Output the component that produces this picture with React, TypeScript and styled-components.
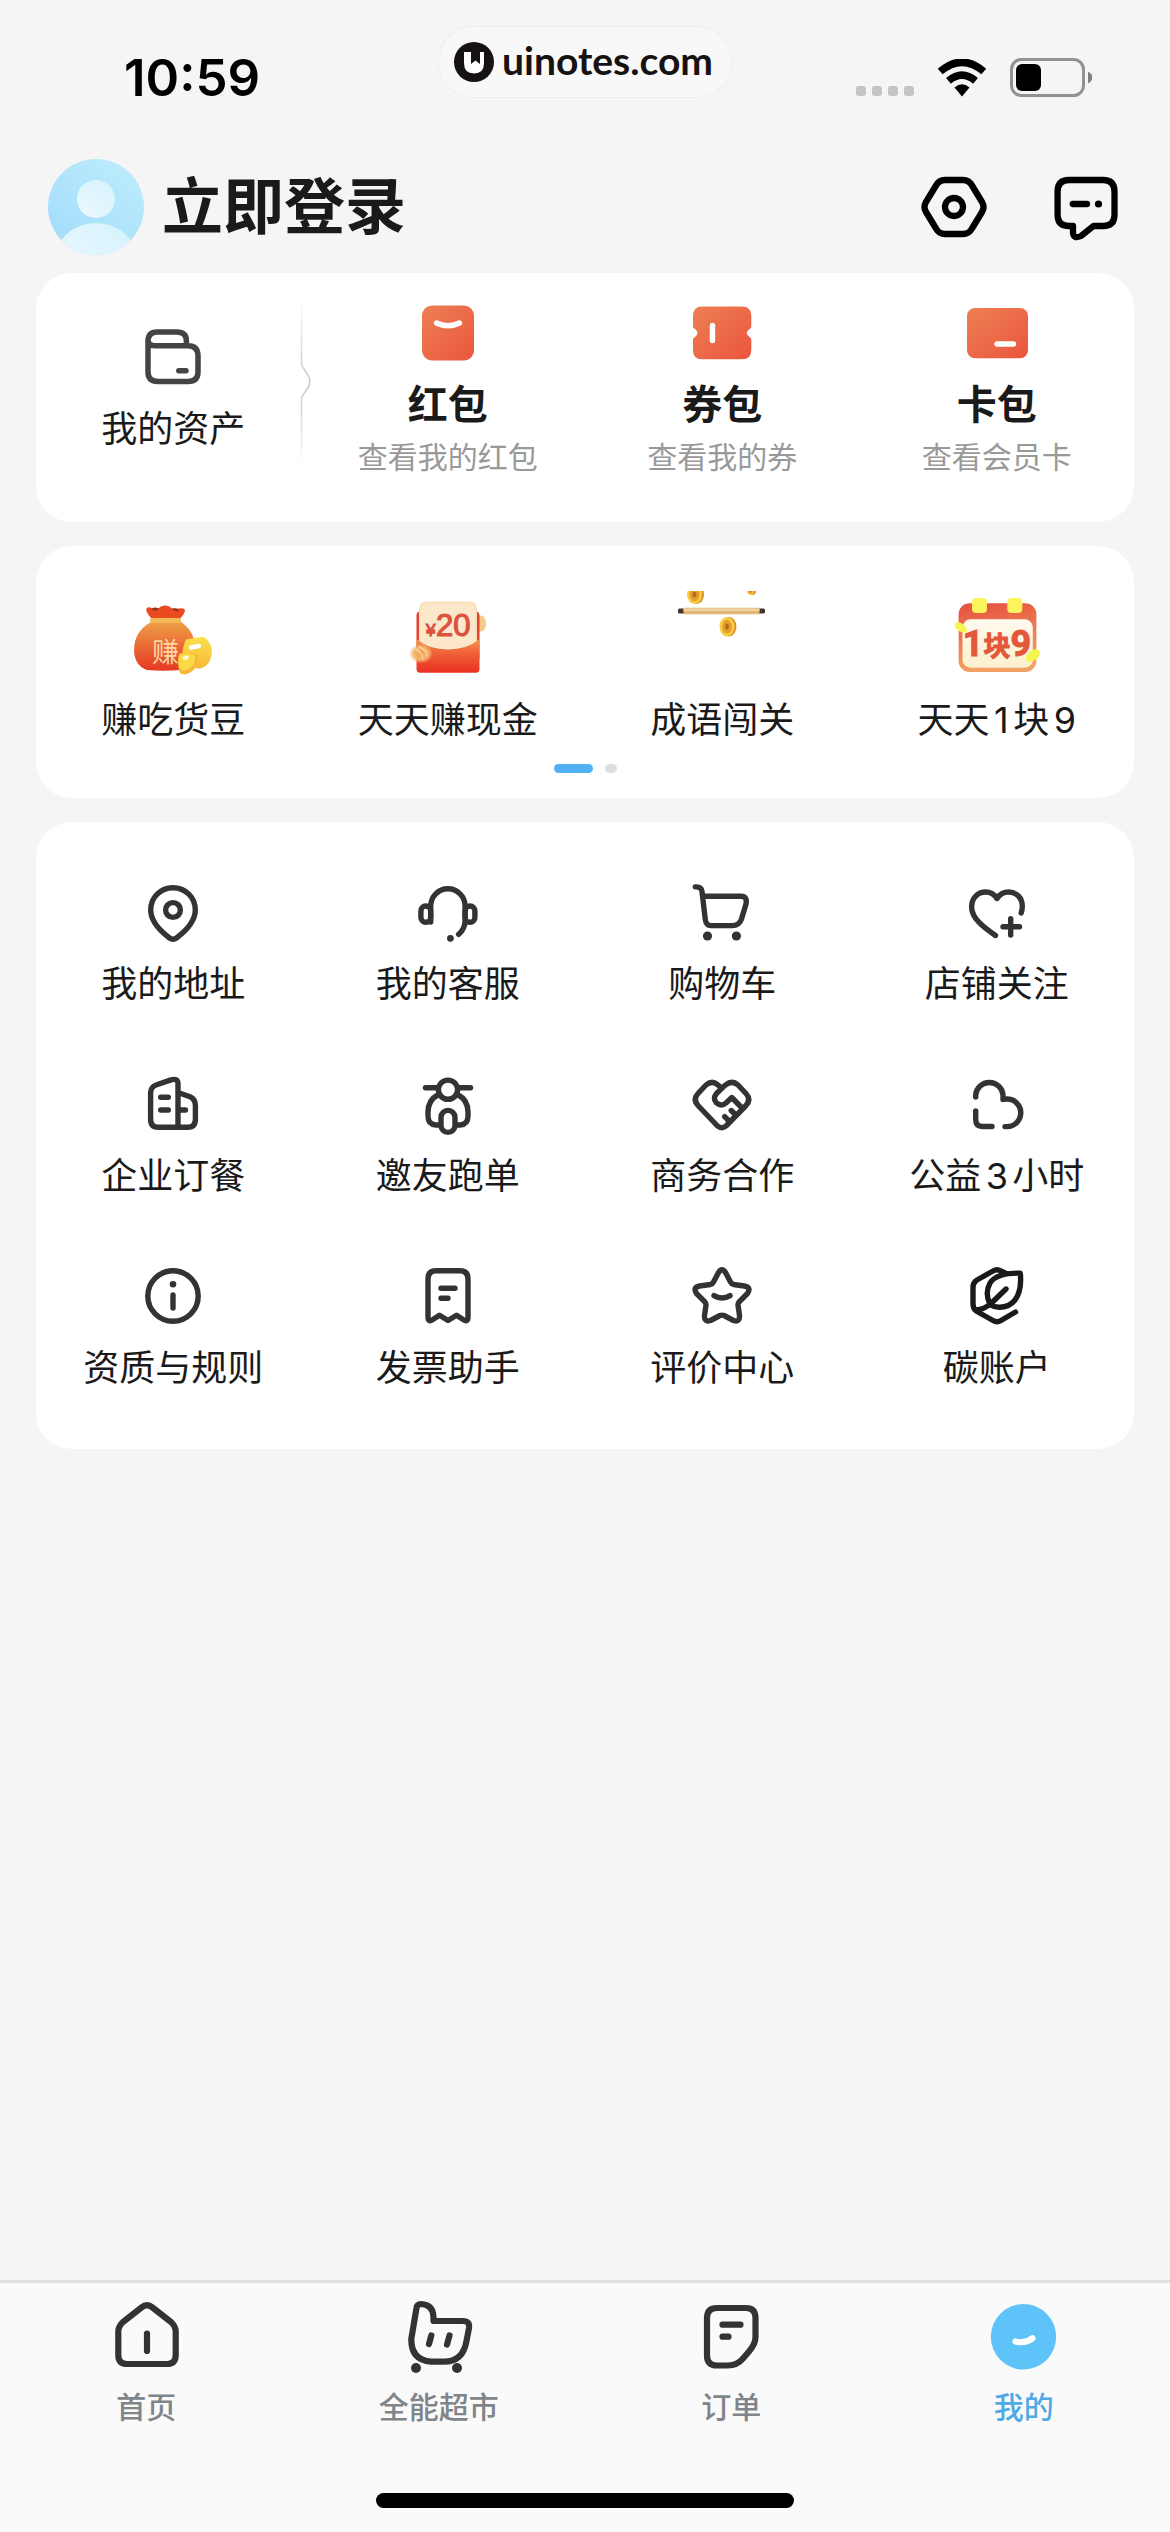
import React from "react";
import styled, { createGlobalStyle } from "styled-components";

const GlobalStyle = createGlobalStyle`
  *, *::before, *::after { box-sizing: border-box; }
  body {
    margin: 0;
    background: #f5f5f5;
    color: #1a1a1a;
    font-family: Inter, "Noto Sans CJK SC", sans-serif;
    text-autospace: normal;
  }
  button { font: inherit; color: inherit; background: none; border: 0; padding: 0; cursor: pointer; }
  a { color: inherit; text-decoration: none; }
  svg { display: block; flex: none; }
`;

const Page = styled.div`
  min-height: 100vh;
  display: flex;
  flex-direction: column;
`;

const StatusBar = styled.div`
  display: grid;
  grid-template-columns: 1fr auto 1fr;
  padding: 26px 0 37px;
`;

const StatusSide = styled.div<{ $end?: boolean }>`
  display: flex;
  align-items: center;
  justify-content: ${(p) => (p.$end ? "flex-end" : "flex-start")};
  gap: 22px;
  height: 72px;
  padding: ${(p) => (p.$end ? "32px 78px 0 0" : "32px 0 0 124px")};
`;

const Clock = styled.time`
  font-size: 51px;
  font-weight: 600;
  line-height: 40px;
  color: #000;
`;

const SitePill = styled.div`
  display: flex;
  align-items: center;
  gap: 8px;
  height: 72px;
  padding: 0 18px 0 15px;
  border-radius: 36px;
  border: 1px dotted #e2e2e2;
  background: #f8f8f8;
  color: #171212;
  font-family: Lato, sans-serif;
  font-size: 39px;
  font-weight: 700;

  span {
    line-height: 40px;
    padding-bottom: 4px;
  }
`;

const Header = styled.header`
  display: flex;
  align-items: center;
  justify-content: space-between;
  padding: 24px 48px 18px;
`;

const LoginButton = styled.button`
  display: flex;
  align-items: center;
  gap: 18px;
  font-size: 61px;
  font-weight: 700;
  line-height: 96px;
`;

const HeaderActions = styled.div`
  display: flex;
  gap: 60px;
`;

const IconButton = styled.button`
  display: block;
  color: #000;
`;

const Main = styled.main`
  flex: 1;
  display: flex;
  flex-direction: column;
  gap: 24px;
  padding: 0 36px;
`;

const Card = styled.section<{ $top: number; $bottom: number }>`
  padding: ${(p) => p.$top}px 0 ${(p) => p.$bottom}px;
  border-radius: 36px;
  background: #fff;
`;

const Grid = styled.div<{ $rowGap?: number }>`
  display: grid;
  grid-template-columns: repeat(4, minmax(0, 1fr));
  row-gap: ${(p) => p.$rowGap ?? 0}px;
`;

const Item = styled.a<{ $dark?: boolean }>`
  display: flex;
  flex-direction: column;
  align-items: center;
  color: ${(p) => (p.$dark ? "#1a1a1a" : "#333")};
`;

const Label = styled.span`
  margin-top: 12px;
  color: #1a1a1a;
  font-size: 36px;
  line-height: 48px;
  white-space: nowrap;
`;

const WalletCell = styled(Item)`
  position: relative;
  padding-top: 24px;
  color: #444;
`;

const NotchLine = styled.svg`
  position: absolute;
  top: 0;
  right: 0;
`;

const WalletTitle = styled.strong`
  margin-top: 12px;
  color: #1a1a1a;
  font-size: 40px;
  font-weight: 700;
  line-height: 48px;
`;

const WalletNote = styled.span`
  margin-top: 8px;
  color: #999;
  font-size: 30px;
  line-height: 40px;
`;

const Pager = styled.div`
  display: flex;
  justify-content: center;
  gap: 12px;
  margin-top: 20px;
`;

const PagerDot = styled.span<{ $active?: boolean }>`
  width: ${(p) => (p.$active ? 39 : 12)}px;
  height: 9px;
  border-radius: 5px;
  background: ${(p) => (p.$active ? "#51b1f2" : "#dedede")};
`;

const TabBar = styled.footer`
  border-top: 3px solid #e0e0e0;
  background: #fafafa;
  padding: 12px 0 24px;
`;

const Tabs = styled.nav`
  display: grid;
  grid-template-columns: repeat(4, minmax(0, 1fr));
`;

const Tab = styled.button<{ $active?: boolean }>`
  display: flex;
  flex-direction: column;
  align-items: center;
  color: #333;

  span {
    margin-top: 8px;
    color: ${(p) => (p.$active ? "#51a9e4" : "#80858a")};
    font-size: 30px;
    font-weight: 500;
    line-height: 40px;
  }
`;

const HomeIndicator = styled.div`
  width: 418px;
  height: 15px;
  margin: 66px auto 0;
  border-radius: 8px;
  background: #000;
`;

/* Outline icon drawn with round strokes on a square grid. */
function Line({ size = 72, width = 5.4, children }: { size?: number; width?: number; children: React.ReactNode }) {
  return (
    <svg width={size} height={size} viewBox={`0 0 ${size} ${size}`} fill="none" stroke="currentColor"
      strokeWidth={width} strokeLinecap="round" strokeLinejoin="round" aria-hidden="true">
      {children}
    </svg>
  );
}

function Dot({ x, y, r }: { x: number; y: number; r: number }) {
  return <circle cx={x} cy={y} r={r} fill="currentColor" stroke="none" />;
}

const services: { label: string; dark?: boolean; icon: React.ReactNode }[] = [
  {
    label: "我的地址",
    icon: (
      <>
        <path d="M36 11.7C48.5 11.7 58.3 21.5 58.3 34C58.3 45 50 54 39.5 62Q36 64.5 32.5 62C22 54 13.7 45 13.7 34C13.7 21.5 23.5 11.7 36 11.7Z" />
        <circle cx="36" cy="34" r="7.4" />
      </>
    ),
  },
  {
    label: "我的客服",
    icon: (
      <>
        <path d="M18.7 46V30A17.2 17.2 0 0 1 53.1 30V44Q53.1 53 46.6 58.3" />
        <rect x="8.9" y="30" width="9.8" height="16.3" rx="4.9" />
        <rect x="53.1" y="30" width="9.8" height="16.3" rx="4.9" />
        <Dot x={38.4} y={62.3} r={3.4} />
      </>
    ),
  },
  {
    label: "购物车",
    icon: (
      <>
        <path d="M9.3 10.9Q15.5 10.5 16 15.5L19.3 43.5Q20 49.6 25 49.6H46Q53.5 49.6 55.5 43L60 28Q61.5 20.3 55 20.3H17.5" />
        <Dot x={21.5} y={60} r={4.6} />
        <Dot x={50.4} y={60} r={4.6} />
      </>
    ),
  },
  {
    label: "店铺关注",
    icon: (
      <>
        <path d="M34.5 59.5C22 51 10.6 42 10.6 31C10.6 22 17 16 24.5 16C29.5 16 33.5 18.5 36 22.5C38.5 18.5 42.5 16 47.5 16C55.5 16 61.3 22 61.3 30C61.3 33 61 35 60.2 37" />
        <path d="M49.7 42.7V59M42 50.7H58.5" />
      </>
    ),
  },
  {
    label: "企业订餐",
    icon: (
      <>
        <path d="M13.6 51V25Q13.6 19 19 17L34 11.9Q41 9.7 41 16V59.3M13.6 51Q13.6 59.3 21 59.3H51Q58.4 59.3 58.4 51V38Q58.4 31 53 28.8L41 24.5" />
        <path d="M23.7 29.3H31.3M23.7 42H31.3M42 42H48.5" />
      </>
    ),
  },
  {
    label: "邀友跑单",
    icon: (
      <>
        <circle cx="36" cy="21.7" r="9.6" />
        <path d="M13.5 19.7H25M47 19.7H58.5M26.5 26.5Q16 32 16 44V48Q16 56.5 24 57H27M45.5 26.5Q56 32 56 44V48Q56 56.5 48 57H45" />
        <rect x="29" y="42.4" width="14" height="22" rx="7" />
      </>
    ),
  },
  {
    label: "商务合作",
    icon: (
      <>
        <path d="M35.7 20.3L39.5 17Q46 11.7 52 17L60 25.5Q65.5 31.5 60 37.5L40 58Q35.7 61.5 31.5 58L12 37.5Q6.5 31.5 12 25.5L20 17Q26.5 11.7 32 17Z" />
        <path d="M35.7 20.3L30.5 25.5Q26.5 30.5 30.3 34.7Q35.3 39 40 35L45.8 29.5L56.5 40.5" />
        <path d="M45.2 42.5L49.8 47M38.7 48.7L43 53" />
      </>
    ),
  },
  {
    label: "公益3小时",
    icon: (
      <>
        <path d="M14.7 29V27A13.7 13.7 0 0 1 42 27V31.5Q43.5 31 46 31A13.8 13.8 0 0 1 46 58.6H44" />
        <path d="M14.7 43V51.5Q14.7 58.5 21.5 58.5H31" />
      </>
    ),
  },
  {
    label: "资质与规则",
    icon: (
      <>
        <circle cx="36" cy="36" r="25.2" />
        <path d="M36 35V48" />
        <Dot x={36} y={24.2} r={3.3} />
      </>
    ),
  },
  {
    label: "发票助手",
    icon: (
      <>
        <path d="M16 57V19Q16 10.7 24 10.7H48Q56 10.7 56 19V57Q56 62.5 51.5 59.8L44.5 55.3L36 60.5L27.5 55.3L20.5 59.8Q16 62.5 16 57Z" />
        <path d="M29 28.3H43M29 38.3H36" />
      </>
    ),
  },
  {
    label: "评价中心",
    icon: (
      <>
        <path d="M32.5 12.5Q36 7 39.5 12.5L44.5 22Q45.5 24 47.5 24.5L58.5 26Q65.5 27.5 61.5 33.5L53 42Q51.8 43.3 52 45L53.5 55.5Q54 62.5 47.5 60.5L38 55.5Q36 54.7 34 55.5L24.5 60.5Q18 62.5 18.5 55.5L20 45Q20.2 43.3 19 42L10.5 33.5Q6.5 27.5 13.5 26L24.5 24.5Q26.5 24 27.5 22Z" />
        <path d="M28 35.6Q36 40.5 44 35.6" />
      </>
    ),
  },
  {
    label: "碳账户",
    dark: true,
    icon: (
      <>
        <path d="M45 13.5L40 11Q36 8.5 32 11L16 20Q12 22.5 12 27V44Q12 49 16 51.5L32 60.5Q36 63 40 60.5L54.5 52" />
        <path d="M59.3 13.2Q61 31 54 40Q48 47.5 38 47.3Q33 47.2 29 44.5Q23.5 33 29 23Q36 12.5 59.3 13.2Z" />
        <path d="M45 29L30 43.5Q23 49.5 15 50" />
      </>
    ),
  },
];

function RedGradient({ id }: { id: string }) {
  return (
    <defs>
      <linearGradient id={id} x1="0" y1="0" x2="1" y2="1">
        <stop offset="0" stopColor="#ee8054" />
        <stop offset="1" stopColor="#ea553d" />
      </linearGradient>
    </defs>
  );
}

const wallets = [
  {
    title: "红包",
    note: "查看我的红包",
    icon: (
      <svg width="72" height="72" viewBox="0 0 72 72" fill="none" aria-hidden="true">
        <RedGradient id="packet" />
        <rect x="10" y="8.5" width="52" height="55" rx="10" fill="url(#packet)" />
        <path d="M24.5 26Q36 31.5 47.5 26" stroke="#fff" strokeWidth="5.4" strokeLinecap="round" />
      </svg>
    ),
  },
  {
    title: "券包",
    note: "查看我的券",
    icon: (
      <svg width="72" height="72" viewBox="0 0 72 72" fill="none" aria-hidden="true">
        <RedGradient id="coupon" />
        <path fill="url(#coupon)" d="M16 9.5H56Q65.3 9.5 65.3 19V29.5Q65.3 31 63.5 32Q58 36 63.5 40Q65.3 41 65.3 42.5V53Q65.3 62.3 56 62.3H16Q7 62.3 7 53V42.5Q7 41 9 40Q14 36 9 32Q7 31 7 29.5V19Q7 9.5 16 9.5Z" />
        <path d="M26.5 28.5V43.5" stroke="#fff" strokeWidth="5.4" strokeLinecap="round" />
      </svg>
    ),
  },
  {
    title: "卡包",
    note: "查看会员卡",
    icon: (
      <svg width="72" height="72" viewBox="0 0 72 72" fill="none" aria-hidden="true">
        <RedGradient id="member" />
        <rect x="6" y="11" width="61" height="50.3" rx="8" fill="url(#member)" />
        <path d="M36 47H52.5" stroke="#fff" strokeWidth="5.4" strokeLinecap="round" />
      </svg>
    ),
  },
];

function MoneyBag() {
  return (
    <svg width="96" height="96" viewBox="0 0 96 96" aria-hidden="true">
      <defs>
        <linearGradient id="bag" x1="0" y1="0" x2="0" y2="1">
          <stop offset="0" stopColor="#eea047" />
          <stop offset="0.5" stopColor="#ea6934" />
          <stop offset="1" stopColor="#e43a22" />
        </linearGradient>
        <linearGradient id="bean" x1="0" y1="0" x2="0" y2="1">
          <stop offset="0" stopColor="#fbe04a" />
          <stop offset="1" stopColor="#f6b93a" />
        </linearGradient>
      </defs>
      <path fill="#ea4a20" d="M26 30Q20 23 21.5 20.5Q23 18.5 27 20L33 20.5Q37 17 40.5 17.5Q44 17.5 47 20.5L54 20.5Q59.5 19.5 60 22.5Q59 27 54.5 31Z" />
      <path fill="#963422" d="M27 20Q31 19 33.5 20.5L32 22.5H28ZM47 20.5Q51 19.5 54 22L53 23.5Q49 23.5 47 20.5Z" />
      <path fill="url(#bag)" d="M26 34Q9 43 9 63Q10 78 22 82Q38 83.5 56 82Q69 79 70.5 62Q70 43 56 34Z" />
      <rect x="25" y="30" width="31" height="5" rx="2" fill="#f3b956" />
      <text x="27" y="74" fontSize="27" fill="#fbd6a6" fontFamily="Noto Sans CJK SC, sans-serif">赚</text>
      <path fill="url(#bean)" d="M61 51.5Q67 50 77 49Q81 49 83 53Q87 57 86.8 64Q86 78 75 80.5Q69 81 66 78L57.5 66Q58 57 61 51.5Z" />
      <path fill="#f6b93a" d="M54 66Q59 64 67 65.5Q73 66 72.5 70Q73 83 60 86.5Q55 87 54 82Q52 73 54 66Z" />
      <path fill="#fbd944" d="M54.5 66Q59 64.5 66 66Q71 66.5 70 70Q70 80 59 82.5Q55 82 54 78Q53 70 54.5 66Z" />
      <path d="M66 59.5L74 58" stroke="#fff" strokeWidth="4.5" strokeLinecap="round" />
      <path d="M59.5 70L62 69.5" stroke="#fff7c5" strokeWidth="4" strokeLinecap="round" />
    </svg>
  );
}

function CashEnvelope() {
  return (
    <svg width="96" height="96" viewBox="0 0 96 96" aria-hidden="true">
      <defs>
        <linearGradient id="cash" x1="0" y1="0" x2="0" y2="1">
          <stop offset="0" stopColor="#f39a55" />
          <stop offset="0.35" stopColor="#f1673c" />
          <stop offset="1" stopColor="#ea2f22" />
        </linearGradient>
        <radialGradient id="glow">
          <stop offset="0" stopColor="#eea04e" />
          <stop offset="0.6" stopColor="#f6b66f" />
          <stop offset="1" stopColor="#f6b66f" stopOpacity="0" />
        </radialGradient>
      </defs>
      <ellipse cx="81" cy="35.5" rx="5" ry="8" fill="#f9c98c" />
      <rect x="16.5" y="23.5" width="63" height="50" rx="4" fill="#df4330" />
      <rect x="19" y="13.5" width="58" height="56" rx="7" fill="#fbe0b8" />
      <rect x="21" y="15.5" width="54" height="52" rx="5" fill="#fbe8ca" />
      <path fill="url(#cash)" d="M16.5 51Q29 61.5 48 61.5Q67 61.5 79.5 51V81Q79.5 84.7 76 84.7H20Q16.5 84.7 16.5 81Z" />
      <g fill="#dd5140" stroke="#dd5140" strokeWidth="1.2" fontFamily="Liberation Sans, sans-serif">
        <text x="26" y="48" fontSize="17">¥</text>
        <text x="36" y="48" fontSize="31">20</text>
      </g>
      <ellipse cx="21" cy="65.5" rx="12" ry="10" fill="url(#glow)" />
      <path d="M15 61Q22 64 23 71M19 58.5Q26 61 27 68" stroke="#fbd49a" strokeWidth="1.5" fill="none" />
    </svg>
  );
}

function Coin({ x, y, w, h }: { x: number; y: number; w: number; h: number }) {
  return (
    <>
      <ellipse cx={x + 2} cy={y} rx={w} ry={h} fill="#d9902c" />
      <ellipse cx={x} cy={y} rx={w} ry={h} fill="#f8cd3e" />
      <ellipse cx={x} cy={y} rx={w * 0.65} ry={h * 0.7} fill="#e39c2e" />
      <ellipse cx={x} cy={y} rx={w * 0.25} ry={h * 0.3} fill="#b56a20" />
    </>
  );
}

function Scroll() {
  return (
    <svg width="96" height="96" viewBox="0 0 96 96" aria-hidden="true">
      <defs>
        <clipPath id="edge"><rect x="0" y="3" width="96" height="93" /></clipPath>
      </defs>
      <g clipPath="url(#edge)">
        <Coin x={20.5} y={6.5} w={7.5} h={9.5} />
        <Coin x={76.5} y={2.5} w={3.5} h={4.5} />
      </g>
      <rect x="4" y="20.5" width="87" height="5" rx="1.5" fill="#40352f" />
      <rect x="9.5" y="19.7" width="76" height="6.5" rx="1" fill="#dfb678" />
      <rect x="9.5" y="20.5" width="76" height="2.5" fill="#f1d3a1" />
      <Coin x={53} y={38.7} w={7.5} h={9.7} />
    </svg>
  );
}

function Calendar() {
  return (
    <svg width="96" height="96" viewBox="0 0 96 96" aria-hidden="true">
      <defs>
        <linearGradient id="cal" x1="0" y1="0" x2="0.2" y2="1">
          <stop offset="0" stopColor="#e6503e" />
          <stop offset="1" stopColor="#f3a265" />
        </linearGradient>
        <linearGradient id="sheet" x1="0" y1="0" x2="0" y2="1">
          <stop offset="0" stopColor="#fffaf0" />
          <stop offset="1" stopColor="#fcf0cd" />
        </linearGradient>
      </defs>
      <rect x="9.6" y="15.3" width="77.8" height="68.7" rx="11" fill="url(#cal)" />
      <rect x="13.5" y="31.3" width="70.3" height="48.4" rx="8" fill="url(#sheet)" />
      <rect x="23" y="10" width="15" height="15" rx="4" fill="#fdf35c" />
      <rect x="58.3" y="10" width="15" height="15" rx="4" fill="#fdf35c" />
      <text x="48" y="68" textAnchor="middle" fill="#e5573b" stroke="#e5573b" strokeWidth="1"
        fontSize="36" fontWeight="700" fontFamily="Roboto, Noto Sans CJK SC, sans-serif" style={{ textAutospace: "no-autospace" } as React.CSSProperties}>
        1<tspan fontSize="27">块</tspan>9
      </text>
      <ellipse cx="11.7" cy="39.5" rx="7" ry="4" transform="rotate(35 11.7 39.5)" fill="#f6f552" />
      <ellipse cx="84" cy="67.5" rx="8" ry="5" transform="rotate(-35 84 67.5)" fill="#f6f552" />
    </svg>
  );
}

const games = [
  { label: "赚吃货豆", icon: <MoneyBag /> },
  { label: "天天赚现金", icon: <CashEnvelope /> },
  { label: "成语闯关", icon: <Scroll /> },
  { label: "天天1块9", icon: <Calendar /> },
];

const tabs = [
  {
    label: "首页",
    icon: (
      <Line size={84} width={6.2}>
        <path d="M37.5 12.5Q43 8 48.5 12.5L67 27Q71.7 31 71.7 37V60Q71.7 69 63 69H23Q14.3 69 14.3 60V37Q14.3 31 19 27Z" />
        <path d="M43 38.5V56" />
      </Line>
    ),
  },
  {
    label: "全能超市",
    icon: (
      <Line size={84} width={6.2}>
        <path d="M19.5 13Q20 9 24 9Q36 9.5 36.5 22V26H66Q73 26 72 33L69.5 46Q66 66.7 47 66.7H34Q14 65 14.3 44Z" />
        <path d="M34.3 40.5L32 49M52.5 40.5L50 49.5" />
        <Dot x={19} y={73} r={5} />
        <Dot x={60} y={73} r={5} />
      </Line>
    ),
  },
  {
    label: "订单",
    icon: (
      <Line size={84} width={6.2}>
        <path d="M28 13H57Q66.5 13 66.5 23V42Q66.5 49 60 56.5L54 63.5Q48 70.5 39 70.5H28Q18 70.5 18 60.5V23Q18 13 28 13Z" />
        <path d="M33.5 29.7H51.5M33.5 41.7H39.5" />
      </Line>
    ),
  },
  {
    label: "我的",
    active: true,
    icon: (
      <svg width="84" height="84" viewBox="0 0 84 84" fill="none" aria-hidden="true">
        <circle cx="41.5" cy="41.8" r="32.7" fill="#5ec3f8" />
        <path d="M33.5 46.5Q43 49 50.5 43.3" stroke="#fff" strokeWidth="6.2" strokeLinecap="round" />
      </svg>
    ),
  },
];

export default function App() {
  return (
    <Page>
      <GlobalStyle />
      <StatusBar>
        <StatusSide>
          <Clock>10:59</Clock>
        </StatusSide>
        <SitePill>
          <svg width="40" height="40" viewBox="0 0 40 40" aria-hidden="true">
            <circle cx="20" cy="20" r="20" fill="#171212" />
            <path fill="#fff" d="M10 10H17V20L21.5 17L26 20V10H30V21Q30 31.5 20 31.5Q10 31.5 10 21Z" />
            <path fill="#171212" d="M17 10H26V22L21.5 18.5L17 22Z" />
          </svg>
          <span>uinotes.com</span>
        </SitePill>
        <StatusSide $end>
          <svg width="58" height="38" viewBox="0 0 58 38" fill="#c4c4c4" aria-hidden="true">
            {[0, 16, 32, 48].map((x) => (
              <rect key={x} x={x} y="27" width="10" height="10" rx="3" />
            ))}
          </svg>
          <svg width="52" height="38" viewBox="0 0 52 38" aria-hidden="true">
            <path d="M4.2 12.5Q26 -6 47.8 12.5M12.5 21.8Q26 10.5 39.5 21.8" fill="none" stroke="#000" strokeWidth="7.5" />
            <path d="M18.5 28.5Q26 22 33.5 28.5L26 37.5Z" />
          </svg>
          <svg width="82" height="40" viewBox="0 0 82 40" aria-hidden="true">
            <rect x="1.5" y="1.5" width="72" height="36" rx="10" fill="none" stroke="#929292" strokeWidth="3" />
            <rect x="6" y="6" width="25" height="27" rx="6" />
            <path d="M78 13.5Q82.5 16 82.5 19.5Q82.5 23 78 25.5Z" fill="#808080" />
          </svg>
        </StatusSide>
      </StatusBar>

      <Header>
        <LoginButton type="button">
          <svg width="96" height="96" viewBox="0 0 96 96" aria-hidden="true">
            <defs>
              <linearGradient id="sky" x1="1" y1="0" x2="0.2" y2="1">
                <stop offset="0" stopColor="#bfeefd" />
                <stop offset="1" stopColor="#a3dcfa" />
              </linearGradient>
              <linearGradient id="skin" x1="1" y1="0" x2="0" y2="1">
                <stop offset="0" stopColor="#d4f2fd" />
                <stop offset="1" stopColor="#eef9fe" />
              </linearGradient>
              <clipPath id="round"><circle cx="48" cy="48" r="48" /></clipPath>
            </defs>
            <circle cx="48" cy="48" r="48" fill="url(#sky)" />
            <g clipPath="url(#round)" fill="url(#skin)">
              <circle cx="48" cy="40" r="19" />
              <ellipse cx="48" cy="102" rx="42" ry="38" />
            </g>
          </svg>
          立即登录
        </LoginButton>
        <HeaderActions>
          <IconButton type="button" aria-label="设置">
            <Line width={6.3}>
              <path d="M27 9H45Q51 9 54 14.5L64.3 31.5Q66.8 36 64.3 40.5L54 57.5Q51 63 45 63H27Q21 63 18 57.5L7.7 40.5Q5.2 36 7.7 31.5L18 14.5Q21 9 27 9Z" />
              <circle cx="36" cy="36" r="9" />
            </Line>
          </IconButton>
          <IconButton type="button" aria-label="消息">
            <Line width={6.3}>
              <path d="M19 9H53Q64.5 9 64.5 20.5V44Q64.5 55 53 55H43.5L31 65Q23.5 68.5 23 61.5V55H19Q7.6 55 7.6 44V20.5Q7.6 9 19 9Z" />
              <path d="M22.8 33H37" />
              <Dot x={48.5} y={33} r={3.6} />
            </Line>
          </IconButton>
        </HeaderActions>
      </Header>

      <Main>
        <Card $top={24} $bottom={45}>
          <Grid>
            <WalletCell href="#assets">
              <Line width={5.5}>
                <path d="M11 20.5Q11 11 20 11H40Q49.4 11 49.4 20V24.7M11 19Q11 24.7 18 24.7H51Q61 24.7 61 35V51Q61 60.5 51 60.5H21Q11 60.5 11 51V20" />
                <path d="M41.8 49.7H49" />
              </Line>
              <Label>我的资产</Label>
              <NotchLine width="11" height="170" viewBox="0 0 11 170" fill="none" aria-hidden="true">
                <defs>
                  <linearGradient id="fade" gradientUnits="userSpaceOnUse" x1="0" y1="0" x2="0" y2="170">
                    <stop offset="0" stopColor="#c4c4c4" stopOpacity="0" />
                    <stop offset="0.5" stopColor="#c4c4c4" />
                    <stop offset="1" stopColor="#c4c4c4" stopOpacity="0" />
                  </linearGradient>
                </defs>
                <path d="M1.5 0V66Q1.5 69 4 72L8.5 79Q11 84.5 8.5 90L4 96.5Q1.5 100 1.5 103V170" stroke="url(#fade)" strokeWidth="1.5" />
              </NotchLine>
            </WalletCell>
            {wallets.map((w) => (
              <Item key={w.title} href="#wallet">
                {w.icon}
                <WalletTitle>{w.title}</WalletTitle>
                <WalletNote>{w.note}</WalletNote>
              </Item>
            ))}
          </Grid>
        </Card>

        <Card $top={42} $bottom={25}>
          <Grid>
            {games.map((g) => (
              <Item key={g.label} href="#game">
                {g.icon}
                <Label>{g.label}</Label>
              </Item>
            ))}
          </Grid>
          <Pager>
            <PagerDot $active />
            <PagerDot />
          </Pager>
        </Card>

        <Card $top={54} $bottom={57}>
          <Grid $rowGap={60}>
            {services.map((s) => (
              <Item key={s.label} href="#service" $dark={s.dark}>
                <Line>{s.icon}</Line>
                <Label>{s.label}</Label>
              </Item>
            ))}
          </Grid>
        </Card>
      </Main>

      <TabBar>
        <Tabs>
          {tabs.map((t) => (
            <Tab key={t.label} type="button" $active={t.active} aria-current={t.active ? "page" : undefined}>
              {t.icon}
              <span>{t.label}</span>
            </Tab>
          ))}
        </Tabs>
        <HomeIndicator />
      </TabBar>
    </Page>
  );
}
